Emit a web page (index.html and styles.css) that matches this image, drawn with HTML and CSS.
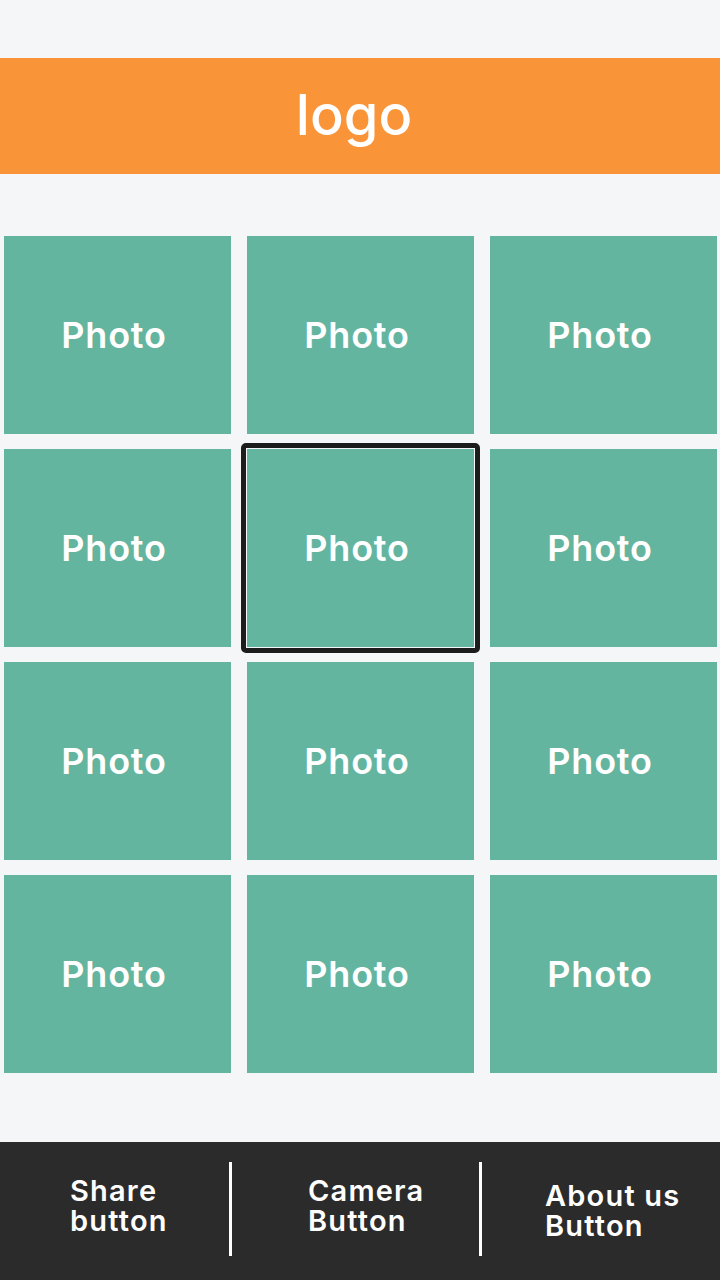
FILE: index.html
```html
<!DOCTYPE html>
<html lang="en">
<head>
<meta charset="utf-8">
<title>Photo grid</title>
<link rel="stylesheet" href="styles.css">
</head>
<body>
<div class="app">
  <header class="header"><span class="logo">logo</span></header>
  <main class="grid">
    <div class="tile">Photo</div>
    <div class="tile">Photo</div>
    <div class="tile">Photo</div>
    <div class="tile">Photo</div>
    <div class="tile selected">Photo</div>
    <div class="tile">Photo</div>
    <div class="tile">Photo</div>
    <div class="tile">Photo</div>
    <div class="tile">Photo</div>
    <div class="tile">Photo</div>
    <div class="tile">Photo</div>
    <div class="tile">Photo</div>
  </main>
  <footer class="footer">
    <div class="fbtn fbtn-share"><span class="line">Share</span><span class="line">button</span></div>
    <div class="divider"></div>
    <div class="fbtn fbtn-camera"><span class="line">Camera</span><span class="line">Button</span></div>
    <div class="divider"></div>
    <div class="fbtn fbtn-about"><span class="line">About us</span><span class="line">Button</span></div>
  </footer>
</div>
</body>
</html>
```

FILE: styles.css
```css
* { box-sizing: border-box; }
html, body { margin: 0; padding: 0; }
body {
  background: #f5f6f8;
  font-family: "Inter", "Open Sans", sans-serif;
  color: #ffffff;
}
.app {
  width: 720px;
  height: 1280px;
  display: flex;
  flex-direction: column;
  padding-top: 58px;
}
.header {
  height: 116px;
  background: #fa9439;
  display: flex;
  align-items: center;
  justify-content: center;
}
.logo {
  font-size: 56px;
  font-weight: 500;
  line-height: 1;
  margin-right: 12px;
  margin-top: -3px;
}
.grid {
  margin-top: 62px;
  padding-left: 4px;
  display: grid;
  grid-template-columns: repeat(3, 227px);
  grid-auto-rows: 198px;
  column-gap: 16px;
  row-gap: 15px;
}
.tile {
  position: relative;
  background: #64b5a0;
  display: flex;
  align-items: center;
  justify-content: center;
  font-size: 36px;
  font-weight: 600;
  letter-spacing: 0.8px;
  padding-right: 7px;
}
.tile.selected::before {
  content: "";
  position: absolute;
  top: -6px;
  left: -6px;
  right: -6px;
  bottom: -6px;
  border: 5px solid #1c1c1c;
  border-radius: 5px;
}
.footer {
  margin-top: auto;
  height: 138px;
  background: #2b2b2b;
  display: grid;
  grid-template-columns: 229px 3px 247px 3px 1fr;
  align-items: start;
  padding-top: 20px;
}
.divider {
  height: 94px;
  background: #ffffff;
}
.fbtn {
  display: flex;
  flex-direction: column;
  font-size: 29px;
  font-weight: 600;
  letter-spacing: 1.2px;
  padding-top: 14px;
}
.line {
  display: block;
  line-height: 30px;
  height: 30px;
}
.fbtn-share { padding-left: 70px; }
.fbtn-camera { padding-left: 76px; }
.fbtn-about { padding-left: 63px; padding-top: 19px; }
```
